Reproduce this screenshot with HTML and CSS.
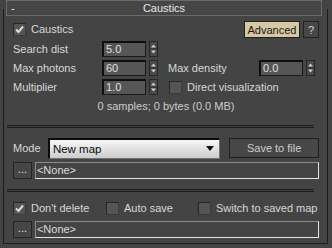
FILE: index.html
```html
<!DOCTYPE html>
<html>
<head>
<meta charset="utf-8">
<link rel="stylesheet" href="styles.css">
</head>
<body>
<div class="panel">
  <div class="title"><span class="minus">-</span><span class="title-text">Caustics</span></div>

  <div class="row-top">
    <label class="check"><span class="box checked"><svg width="11" height="11" viewBox="0 0 11 11"><path d="M2 5.5 L4.5 8 L9 2.5" fill="none" stroke="#dcdcdc" stroke-width="2"/></svg></span>Caustics</label>
    <div class="top-btns">
      <span class="btn-adv">Advanced</span>
      <span class="btn-q">?</span>
    </div>
  </div>

  <div class="params">
    <span class="lbl">Search dist</span>
    <span class="num">5.0</span>
    <span class="spin"><svg width="9" height="16" viewBox="0 0 9 16"><path d="M2 6.5 L4.5 3.5 L7 6.5Z M2 9.5 L4.5 12.5 L7 9.5Z" fill="#cfcfcf"/><line x1="1" y1="8" x2="8" y2="8" stroke="#2a2a2a"/></svg></span>
    <span></span><span></span><span></span>

    <span class="lbl">Max photons</span>
    <span class="num">60</span>
    <span class="spin"><svg width="9" height="16" viewBox="0 0 9 16"><path d="M2 6.5 L4.5 3.5 L7 6.5Z M2 9.5 L4.5 12.5 L7 9.5Z" fill="#cfcfcf"/><line x1="1" y1="8" x2="8" y2="8" stroke="#2a2a2a"/></svg></span>
    <span class="lbl lbl-right">Max density</span>
    <span class="num">0.0</span>
    <span class="spin"><svg width="9" height="16" viewBox="0 0 9 16"><path d="M2 6.5 L4.5 3.5 L7 6.5Z M2 9.5 L4.5 12.5 L7 9.5Z" fill="#cfcfcf"/><line x1="1" y1="8" x2="8" y2="8" stroke="#2a2a2a"/></svg></span>

    <span class="lbl">Multiplier</span>
    <span class="num">1.0</span>
    <span class="spin"><svg width="9" height="16" viewBox="0 0 9 16"><path d="M2 6.5 L4.5 3.5 L7 6.5Z M2 9.5 L4.5 12.5 L7 9.5Z" fill="#cfcfcf"/><line x1="1" y1="8" x2="8" y2="8" stroke="#2a2a2a"/></svg></span>
    <label class="check span3"><span class="box"></span>Direct visualization</label>
  </div>

  <div class="info">0 samples; 0 bytes (0.0 MB)</div>

  <div class="sep"></div>

  <div class="row-mode">
    <span class="lbl mode-lbl">Mode</span>
    <div class="dropdown"><span>New map</span><svg width="8" height="5" viewBox="0 0 8 5"><path d="M0 0 H8 L4 5Z" fill="#111"/></svg></div>
    <span class="btn-save">Save to file</span>
  </div>

  <div class="row-file">
    <span class="btn-dots">...</span>
    <span class="field">&lt;None&gt;</span>
  </div>

  <div class="sep sep2"></div>

  <div class="row-checks">
    <label class="check"><span class="box checked"><svg width="11" height="11" viewBox="0 0 11 11"><path d="M2 5.5 L4.5 8 L9 2.5" fill="none" stroke="#dcdcdc" stroke-width="2"/></svg></span>Don't delete</label>
    <label class="check"><span class="box"></span>Auto save</label>
    <label class="check"><span class="box"></span>Switch to saved map</label>
  </div>

  <div class="row-file row-file2">
    <span class="btn-dots">...</span>
    <span class="field">&lt;None&gt;</span>
  </div>
</div>
</body>
</html>
```

FILE: styles.css
```css
html, body {
  margin: 0;
  padding: 0;
  background: #444444;
  width: 332px;
  height: 248px;
  overflow: hidden;
}
body {
  font-family: "Liberation Sans", Arial, sans-serif;
  font-size: 11px;
  color: #d8d8d8;
  display: flow-root;
}
.panel {
  display: flow-root;
  box-sizing: border-box;
  margin: 9px 4px 0 3px;
  height: 235px;
  border: 1px solid #1c1c1c;
  border-top: none;
  padding: 0 8px 0 9px;
}
.title {
  box-sizing: border-box;
  height: 16px;
  margin: -9px -3px 0 -7px;
  border: 1px solid #6a6a6a;
  background: #464646;
  display: flex;
  align-items: center;
  justify-content: center;
  position: relative;
  color: #e8e8e8;
  font-size: 11px;
  line-height: 14px;
}
.minus {
  position: absolute;
  left: 4px;
  top: 0;
  color: #e8e8e8;
}
.row-top {
  margin-top: 5px;
  height: 17px;
  display: flex;
  align-items: center;
  justify-content: space-between;
}
.check {
  display: flex;
  align-items: center;
  gap: 5px;
  white-space: nowrap;
  line-height: 13px;
}
.box {
  box-sizing: border-box;
  width: 13px;
  height: 13px;
  background: #555555;
  border: 1px solid #262626;
  border-right-color: #3a3a3a;
  border-bottom-color: #3a3a3a;
  display: flex;
  align-items: center;
  justify-content: center;
}
.top-btns {
  display: flex;
  gap: 3px;
  height: 17px;
}
.btn-adv {
  box-sizing: border-box;
  width: 56px;
  height: 17px;
  background: #d6c8a3;
  border: 1px solid #222;
  color: #161616;
  display: flex;
  align-items: center;
  justify-content: center;
}
.btn-q {
  box-sizing: border-box;
  width: 16px;
  height: 17px;
  background: #474747;
  border: 1px solid #222;
  color: #cfcfcf;
  display: flex;
  align-items: center;
  justify-content: center;
}
.params {
  margin-top: 3px;
  display: grid;
  grid-template-columns: 89px 44px 12px 101px 44px 12px;
  grid-auto-rows: 16px;
  row-gap: 3px;
}
.lbl {
  display: flex;
  align-items: center;
  line-height: 13px;
}
.lbl-right { padding-left: 10px; }
.num {
  box-sizing: border-box;
  height: 16px;
  background: #565656;
  border: 1px solid #1a1a1a;
  border-top: 2px solid #0e0e0e;
  border-left: 2px solid #0e0e0e;
  color: #e0e0e0;
  padding-left: 2px;
  line-height: 13px;
}
.spin {
  box-sizing: border-box;
  width: 9px;
  height: 16px;
  margin-left: 3px;
  border: 1px solid #262626;
  background: #4a4a4a;
  display: block;
}
.spin svg { display: block; margin: -1px; }
.span3 {
  grid-column: 4 / span 3;
  margin-left: 11px;
}
.info {
  margin-top: 5px;
  text-align: center;
  line-height: 13px;
  color: #cccccc;
}
.sep {
  margin: 12px 5px 0 -6px;
  height: 3px;
  border-top: 1px solid #1a1a1a;
  border-bottom: 1px solid #1a1a1a;
  box-sizing: border-box;
}
.row-mode {
  margin-top: 10px;
  height: 20px;
  display: flex;
  align-items: center;
}
.mode-lbl { width: 35px; height: 20px; }
.dropdown {
  box-sizing: border-box;
  width: 173px;
  height: 21px;
  background: linear-gradient(#f6f6f6, #cdcdcd);
  border: 1px solid #707070;
  border-top: 2px solid #0a0a0a;
  border-left: 2px solid #0a0a0a;
  color: #0a0a0a;
  display: flex;
  align-items: center;
  justify-content: space-between;
  padding: 0 5px 0 3px;
  font-size: 11.5px;
}
.btn-save {
  box-sizing: border-box;
  margin-left: 9px;
  width: 90px;
  height: 20px;
  border: 1px solid #1e1e1e;
  background: #474747;
  color: #cccccc;
  display: flex;
  align-items: center;
  justify-content: center;
}
.row-file {
  margin-top: 4px;
  height: 17px;
  display: flex;
  gap: 3px;
}
.btn-dots {
  box-sizing: border-box;
  width: 19px;
  height: 17px;
  border: 1px solid #222;
  background: #464646;
  color: #e8e8e8;
  display: flex;
  align-items: center;
  justify-content: center;
  line-height: 10px;
  padding-bottom: 3px;
}
.field {
  box-sizing: border-box;
  width: 286px;
  height: 17px;
  border: 1px solid #e4e4e4;
  border-top-color: #8c8c8c;
  border-left-color: #8c8c8c;
  color: #dcdcdc;
  padding-left: 1px;
  line-height: 14px;
}
.sep2 { margin-top: 10px; }
.row-checks {
  margin-top: 9px;
  height: 15px;
  display: grid;
  grid-template-columns: 93px 92px auto;
  align-items: center;
}
.row-file2 { margin-top: 5px; }
```
